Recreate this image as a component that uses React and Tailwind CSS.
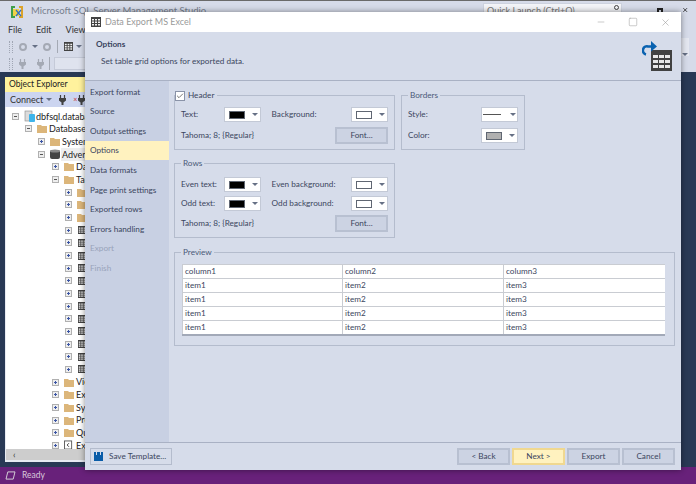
import { Check, Minus, Square, X } from 'lucide-react'

const FONT = "font-['Lato',sans-serif]"

const navItems = ['Export format', 'Source', 'Output settings', 'Options', 'Data formats', 'Page print settings', 'Exported rows', 'Errors handling', 'Export', 'Finish']

const treeRows = [
  { level: 0, open: true, icon: 'db', text: 'dbfsql.database.windows.net' },
  { level: 1, open: true, icon: 'folder', text: 'Databases' },
  { level: 2, icon: 'folder', text: 'System Databases' },
  { level: 2, open: true, icon: 'cyl', text: 'AdventureWorks', selected: true },
  { level: 3, icon: 'folder', text: 'Database Diagrams' },
  { level: 3, open: true, icon: 'folder', text: 'Tables' },
  { level: 4, icon: 'folder', text: 'System Tables' },
  { level: 4, icon: 'folder', text: 'FileTables' },
  { level: 4, icon: 'folder', text: 'External Tables' },
  ...Array.from({ length: 12 }, (_, i) => ({ level: 4, icon: 'table', text: 'dbo.Table' + i })),
  { level: 3, icon: 'folder', text: 'Views' },
  { level: 3, icon: 'folder', text: 'External Resources' },
  { level: 3, icon: 'folder', text: 'Synonyms' },
  { level: 3, icon: 'folder', text: 'Programmability' },
  { level: 3, icon: 'folder', text: 'Query Store' },
  { level: 3, icon: 'ext', text: 'Extended Events' },
]

function TableIcon({ className }) {
  return (
    <svg viewBox="0 0 10 10" className={className}>
      <rect width="10" height="10" fill="#424242" />
      <path d="M1 2h2v1.500H1zM4 2h2v1.500H4zM7 2h2v1.500H7zM1 4.500h2V6H1zM4 4.500h2V6H4zM7 4.500h2V6H7zM1 7h2v1.500H1zM4 7h2v1.500H4zM7 7h2v1.500H7z" fill="#f2f2f2" />
    </svg>
  )
}

function PlugIcon({ color = '#424242', className = 'w-[7px] h-[10px]' }) {
  return (
    <svg viewBox="0 0 7 10" className={className}>
      <path d="M1.500 0v3M5.500 0v3" stroke={color} strokeWidth="1.200" />
      <path d="M0 3h7v2.500L4.500 7.500V10h-2V7.500L0 5.500z" fill={color} />
    </svg>
  )
}

function TreeIcon({ type }) {
  if (type === 'folder') {
    return (
      <svg viewBox="0 0 10 9" className="w-[10px] h-[9px]">
        <path d="M0 1h4l1 1h5v7H0z" fill="#dcb67a" />
      </svg>
    )
  }
  if (type === 'table') return <TableIcon className="w-[8px] h-[8px] ml-px" />
  if (type === 'db') {
    return (
      <svg viewBox="0 0 12 12" className="w-[12px] h-[12px]">
        <rect x="1" y="1" width="7" height="10" fill="#dcdcdc" stroke="#888" strokeWidth="0.6" />
        <rect x="5" y="4" width="6" height="8" rx="1" fill="#3fb4ea" />
      </svg>
    )
  }
  if (type === 'cyl') {
    return (
      <svg viewBox="0 0 10 10" className="w-[10px] h-[10px]">
        <rect y="1" width="10" height="9" rx="2" fill="#444" />
        <ellipse cx="5" cy="2" rx="5" ry="1.600" fill="#888" />
      </svg>
    )
  }
  return (
    <svg viewBox="0 0 10 10" className="w-[9px] h-[10px]">
      <rect x="0.500" y="0.500" width="8" height="9" fill="#fff" stroke="#555" />
      <path d="M5.500 3 3.500 5l2 2" fill="none" stroke="#333" />
    </svg>
  )
}

function Expander({ open }) {
  return (
    <svg viewBox="0 0 7 7" className="w-[7px] h-[7px]">
      <rect x="0.500" y="0.500" width="6" height="6" fill="#eee" stroke="#b0b0b0" />
      <path d={open ? 'M2 3.500h3' : 'M2 3.500h3M3.500 2v3'} stroke={open ? '#555' : '#3b55a5'} />
    </svg>
  )
}

function TreeRow({ row }) {
  const offsets = ['ml-[6px]', 'ml-[19px]', 'ml-[32px]', 'ml-[46px]', 'ml-[59px]']
  return (
    <div className="flex items-center h-[12.67px] whitespace-nowrap text-[9px] text-[#222]">
      <div className={offsets[row.level] + ' w-[7px] flex'}>
        <Expander open={row.open} />
      </div>
      <div className="w-[17px] pl-[5px] flex items-center">
        <TreeIcon type={row.icon} />
      </div>
      <span className={row.selected ? 'bg-[#eeeeee] -ml-px pl-px' : '-ml-px pl-px'}>{row.text}</span>
    </div>
  )
}

function ComboArrow() {
  return <div className="w-0 h-0 border-x-[3px] border-x-transparent border-t-[3px] border-t-[#667085]" />
}

function ColorCombo({ swatch = 'bg-black' }) {
  return (
    <div className="w-[37px] h-[15px] bg-white border border-[#c3c9d6] flex items-center pl-[4px] gap-[7px]">
      <div className={'w-[16px] h-[8px] border border-[#5f6672] ' + swatch} />
      <ComboArrow />
    </div>
  )
}

function Group({ title, className, children }) {
  return (
    <div className={'relative border border-[#b4bccd] ' + className}>
      <div className="absolute -top-[6px] left-[6px] bg-[#d6dcea] px-[2px] text-[8.2px] leading-[11px] text-[#4a5a78]">{title}</div>
      {children}
    </div>
  )
}

function DlgButton({ children, className = 'w-[53px] bg-[#ccd3e3] border-[#b8c0d1]' }) {
  return (
    <button className={'h-[17px] border-2 text-[8.2px] leading-none text-[#3b465e] flex items-center justify-center ' + className}>
      {children}
    </button>
  )
}

function ColorRow({ label, label2, swatch, swatch2 }) {
  return (
    <div className="flex items-center">
      <div className="w-[43px] text-[8.2px] text-[#3b465e] whitespace-nowrap">{label}</div>
      <ColorCombo swatch={swatch} />
      <div className="w-[91px] pl-[11px] text-[8.2px] text-[#3b465e] whitespace-nowrap">{label2}</div>
      <ColorCombo swatch={swatch2} />
    </div>
  )
}

function Dialog() {
  return (
    <div className="absolute left-[85px] top-[12px] w-[596px] h-[458px] flex flex-col bg-[#d6dcea] shadow-[0_0_6px_rgba(0,0,0,0.45)]">
      <div className="h-[20px] bg-white flex items-center pl-[6px] shrink-0">
        <TableIcon className="w-[10px] h-[10px]" />
        <span className="ml-[4px] text-[9px] text-[#9a9a9a]">Data Export MS Excel</span>
        <div className="ml-auto flex items-center gap-[22px] pr-[10px] text-[#9a9a9a]">
          <Minus className="w-[10px] h-[10px]" strokeWidth={1.25} />
          <Square className="w-[10px] h-[10px]" strokeWidth={1.25} />
          <X className="w-[11px] h-[11px]" strokeWidth={1.25} />
        </div>
      </div>

      <div className="h-[49px] border-b border-[#a9b1c4] shrink-0 flex justify-between pl-[11px] pr-[9px]">
        <div>
          <div className="mt-[5px] text-[8.2px] font-bold leading-[14px] text-[#3a4560]">Options</div>
          <div className="mt-[3px] ml-[5px] text-[8.2px] leading-[14px] text-[#3b465e]">Set table grid options for exported data.</div>
        </div>
        <svg viewBox="0 0 30 30" className="w-[30px] h-[30px] mt-[9px]">
          <rect x="9" y="9" width="21" height="21" fill="#424242" />
          <path d="M11 14h5v3h-5zM17 14h5v3h-5zM23 14h5v3h-5zM11 19h5v3h-5zM17 19h5v3h-5zM23 19h5v3h-5zM11 24h5v3h-5zM17 24h5v3h-5zM23 24h5v3h-5z" fill="#e8e8e8" />
          <path d="M11 5.500H6a4 4 0 0 0-2 8" fill="none" stroke="#0a62b0" strokeWidth="2.600" />
          <path d="M9 0l6 5.500-6 5z" fill="#0a62b0" />
        </svg>
      </div>

      <div className="flex-1 flex min-h-0">
        <div className="w-[84px] bg-[#c8d0e3] pt-[1px] shrink-0">
          {navItems.map((item, i) => (
            <div
              key={item}
              className={
                'h-[19.6px] pl-[5px] flex items-center text-[8.2px] whitespace-nowrap ' +
                (i === 3 ? 'bg-[#fff2bf] text-[#3a4560] ' : i > 7 ? 'text-[#98a3ba] ' : 'text-[#3b465e] ')
              }
            >
              {item}
            </div>
          ))}
        </div>

        <div className="flex-1 pl-[5px] pr-[6px] pt-[14px] flex flex-col">
          <div className="flex gap-[6px]">
            <div className="flex flex-col gap-[13px]">
              <Group title="" className="w-[221px] h-[55px] px-[6px] pt-[11px]">
                <div className="absolute -top-[6px] left-0 bg-[#d6dcea] pr-[3px] flex items-center gap-[3px]">
                  <div className="w-[10px] h-[10px] bg-white border border-[#8a93a8] flex items-center justify-center">
                    <Check className="w-[8px] h-[8px] text-[#333]" strokeWidth={2} />
                  </div>
                  <span className="text-[8.2px] leading-[11px] text-[#3b465e]">Header</span>
                </div>
                <ColorRow label="Text:" label2="Background:" swatch2="bg-white" />
                <div className="mt-[5px] flex items-center justify-between">
                  <span className="text-[8.2px] text-[#3b465e]">Tahoma; 8; {'{Regular}'}</span>
                  <DlgButton>Font...</DlgButton>
                </div>
              </Group>
              <Group title="Rows" className="w-[221px] h-[75px] px-[6px] pt-[13px]">
                <div className="flex flex-col gap-[4px]">
                  <ColorRow label="Even text:" label2="Even background:" swatch2="bg-white" />
                  <ColorRow label="Odd text:" label2="Odd background:" swatch2="bg-white" />
                </div>
                <div className="mt-[4px] flex items-center justify-between">
                  <span className="text-[8.2px] text-[#3b465e]">Tahoma; 8; {'{Regular}'}</span>
                  <DlgButton>Font...</DlgButton>
                </div>
              </Group>
            </div>
            <Group title="Borders" className="w-[124px] h-[55px] px-[6px] pt-[11px]">
              <div className="flex flex-col gap-[6px]">
                <div className="flex items-center justify-between">
                  <span className="text-[8.2px] text-[#3b465e]">Style:</span>
                  <div className="w-[37px] h-[15px] bg-white border border-[#c3c9d6] flex items-center pl-[1px] gap-[9px]">
                    <div className="w-[18px] h-px bg-[#555]" />
                    <ComboArrow />
                  </div>
                </div>
                <div className="flex items-center justify-between">
                  <span className="text-[8.2px] text-[#3b465e]">Color:</span>
                  <ColorCombo swatch="bg-[#b0b0b0]" />
                </div>
              </div>
            </Group>
          </div>

          <Group title="Preview" className="mt-[14px] w-[501px] h-[94px] px-[7px] pt-[11px]">
            <div className="border-b-2 border-[#a2a9b8] bg-white w-[483px]">
              {['column', 'item', 'item', 'item', 'item'].map((kind, r) => (
                <div key={r} className="grid grid-cols-[160px_161px_162px] h-[14px] border-t border-[#c9ccd2]">
                  {[1, 2, 3].map((c) => (
                    <div key={c} className="pl-[2px] border-l border-[#c9ccd2] text-[8.2px] leading-[13px] text-[#3b465e]">
                      {kind + c}
                    </div>
                  ))}
                </div>
              ))}
            </div>
          </Group>
        </div>
      </div>

      <div className="h-[28px] border-t border-[#a9b1c4] shrink-0 flex items-center pl-[5px] pr-[6px] bg-[#d6dcea]">
        <button className="h-[17px] w-[82px] border border-[#b4bccd] flex items-center pl-[3px] gap-[6px] text-[8.2px] text-[#3b465e] whitespace-nowrap">
          <svg viewBox="0 0 9 9" className="w-[9px] h-[9px]">
            <path d="M0 0h2v3h1V0h3v3h1V0h2v9H0z" fill="#0a5ca8" />
          </svg>
          Save Template...
        </button>
        <div className="ml-auto flex gap-[2px]">
          <DlgButton>&lt; Back</DlgButton>
          <DlgButton className="w-[53px] bg-[#fff2bf] border-[#f0d890]">Next &gt;</DlgButton>
          <DlgButton>Export</DlgButton>
          <DlgButton>Cancel</DlgButton>
        </div>
      </div>
    </div>
  )
}

export default function App() {
  return (
    <div className={'relative w-[696px] h-[484px] overflow-hidden flex flex-col bg-[#293955] ' + FONT}>
      <div className="h-[72px] bg-[#d6dbe9] border-t border-[#6a6a6a] shrink-0 flex flex-col">
        <div className="h-[21px] flex items-center pl-[10px] shrink-0">
          <svg viewBox="0 0 14 14" className="w-[14px] h-[14px]">
            <path d="M1 1h4v2H3v8h2v2H1z" fill="#3f9e4a" />
            <path d="M9 1h4v12H9v-2h2V3H9z" fill="#dca329" />
            <rect x="3" y="4" width="6" height="7" fill="#f1d148" />
            <path d="M6 5l5 6M11 5l-5 6" stroke="#2f6fc1" strokeWidth="1.200" />
          </svg>
          <span className="ml-[7px] text-[9.500px] text-[#777f8e] whitespace-nowrap">Microsoft SQL Server Management Studio</span>
          <div className="ml-auto -mt-[6px] w-[139px] h-[11px] bg-[#f3f4f8] border border-[#cdd2de] text-[9px] leading-[13px] text-[#777] pl-[3px] flex items-start justify-between pr-[2px]">
            <span className="whitespace-nowrap">Quick Launch (Ctrl+Q)</span>
            <div className="w-[5px] h-[5px] mt-[1px] rounded-full border border-[#444]" />
          </div>
          <div className="w-[74px] -mt-[3px] pl-[35px] flex items-center gap-[19px] pr-[8px]">
            <div className="w-[6px] h-[5px] border-2 border-[#222] border-b-0" />
            <X className="w-[8px] h-[8px] text-[#222]" strokeWidth={3} />
          </div>
        </div>
        <div className="h-[15px] flex items-center pl-[8px] gap-[14px] text-[9px] text-[#333] shrink-0">
          <span>File</span>
          <span>Edit</span>
          <span>View</span>
        </div>
        <div className="h-[19px] flex items-center pl-[9px] shrink-0">
          <div className="w-[4px] h-[12px] border-x border-dotted border-[#a0a6b4]" />
          <div className="ml-[6px] w-[8px] h-[8px] rounded-full border-2 border-[#a4a9b4]" />
          <div className="ml-[5px]"><ComboArrow /></div>
          <div className="ml-[5px] w-[8px] h-[8px] rounded-full border-2 border-[#a4a9b4]" />
          <div className="ml-[6px] w-px h-[13px] bg-[#a4a9b4]" />
          <TableIcon className="ml-[6px] w-[9px] h-[9px]" />
          <div className="ml-[3px]"><ComboArrow /></div>
          <div className="ml-auto w-[8px] h-[18px] mr-[7px] bg-[#e4e7f0] flex items-end justify-center"><ComboArrow /></div>
        </div>
        <div className="h-[15px] flex items-center pl-[9px] shrink-0">
          <div className="w-[4px] h-[12px] border-x border-dotted border-[#a0a6b4]" />
          <PlugIcon color="#a4a9b4" className="ml-[6px] w-[7px] h-[10px]" />
          <PlugIcon color="#a4a9b4" className="ml-[11px] w-[7px] h-[10px]" />
          <div className="ml-[5px] w-px h-[13px] bg-[#a4a9b4]" />
          <div className="ml-[4px] w-[100px] h-[13px] bg-[#dfe3ee] border border-[#c5cad8]" />
        </div>
      </div>

      <div className="flex-1 min-h-0 pl-[5px] pt-[5px]">
        <div className="w-[300px] h-[385px] flex flex-col bg-[#e8ebf2]">
          <div className="h-[15px] bg-[#fff29d] pl-[4px] text-[8.500px] leading-[15px] text-[#222] shrink-0">Object Explorer</div>
          <div className="h-[15px] bg-[#ccd5f0] pl-[5px] text-[9px] leading-[15px] text-[#333] shrink-0 flex items-center">
            <span>Connect</span>
            <div className="ml-[3px]"><ComboArrow /></div>
            <PlugIcon className="ml-[7px] w-[7px] h-[10px]" />
            <div className="ml-[7px] text-[7px] leading-none text-[#c83232]">×</div>
            <PlugIcon className="ml-px w-[7px] h-[10px]" />
          </div>
          <div className="flex-1 min-h-0 ml-px bg-white pt-[3px] overflow-hidden">
            {treeRows.map((row) => (
              <TreeRow key={row.text} row={row} />
            ))}
          </div>
          <div className="h-[11px] ml-px bg-[#cdcdcd] shrink-0 pl-[7px] flex items-center text-[9px] text-[#333]">‹</div>
          <div className="h-[2px]" />
        </div>
      </div>

      <div className="h-[17px] bg-[#68217a] shrink-0 flex items-center pl-[5px] gap-[6px]">
        <svg viewBox="0 0 12 10" className="w-[11px] h-[9px]">
          <path d="M3 1h8L9 9H1z" fill="none" stroke="#ddd" />
        </svg>
        <span className="text-[8.500px] text-[#d8c8dc]">Ready</span>
      </div>

      <Dialog />
    </div>
  )
}
